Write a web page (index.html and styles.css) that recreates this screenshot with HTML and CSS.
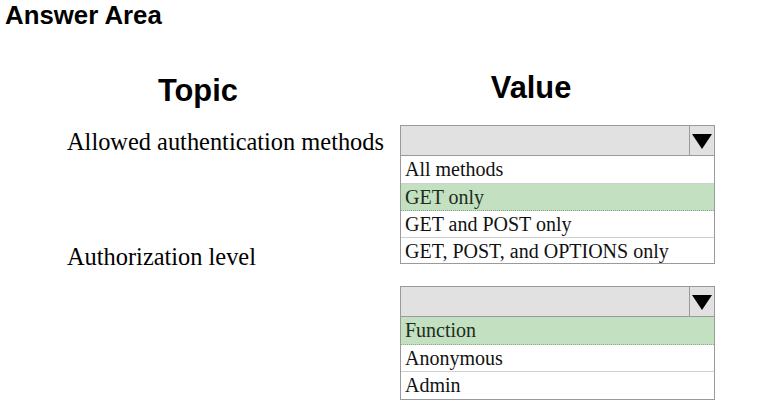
FILE: index.html
```html
<!DOCTYPE html>
<html lang="en">
<head>
    <meta charset="UTF-8">
    <meta name="viewport" content="width=device-width, initial-scale=1.0">
    <title>Answer Area</title>
    <link rel="stylesheet" href="styles.css">
</head>
<body>
    <h1 class="area-title">Answer Area</h1>

    <div class="headings">
        <h2 class="heading topic">Topic</h2>
        <h2 class="heading value">Value</h2>
    </div>

    <div class="answer-grid">
        <div class="labels">
            <div class="label first">Allowed authentication methods</div>
            <div class="label second">Authorization level</div>
        </div>

        <div class="dropdowns">
            <!-- Allowed authentication methods -->
            <div class="dropdown">
                <div class="dropdown-head">
                    <div class="dropdown-value"></div>
                    <div class="dropdown-arrow">
                        <svg width="20" height="16" viewBox="0 0 20 16"><polygon points="0,1 20,1 10,16" fill="#000"/></svg>
                    </div>
                </div>
                <div class="option">All methods</div>
                <div class="option selected">GET only</div>
                <div class="option">GET and POST only</div>
                <div class="option">GET, POST, and OPTIONS only</div>
            </div>

            <!-- Authorization level -->
            <div class="dropdown">
                <div class="dropdown-head">
                    <div class="dropdown-value"></div>
                    <div class="dropdown-arrow">
                        <svg width="20" height="16" viewBox="0 0 20 16"><polygon points="0,1 20,1 10,16" fill="#000"/></svg>
                    </div>
                </div>
                <div class="option selected">Function</div>
                <div class="option">Anonymous</div>
                <div class="option">Admin</div>
            </div>
        </div>
    </div>
</body>
</html>
```

FILE: styles.css
```css
body {
    margin: 0;
    padding: 0;
    background-color: #ffffff;
    color: #000000;
    font-family: "Liberation Serif", "Times New Roman", serif;
}

.area-title {
    margin: 0;
    padding: 1px 0 0 5px;
    font-family: "Liberation Sans", Arial, sans-serif;
    font-size: 25.8px;
    font-weight: bold;
    line-height: 29px;
}

.headings {
    display: flex;
    margin-top: 40px;
    height: 40px;
}

.heading {
    margin: 0;
    font-family: "Liberation Sans", Arial, sans-serif;
    font-size: 30.8px;
    font-weight: bold;
    line-height: 34px;
}

.heading.topic {
    margin-left: 158px;
    margin-top: 4px;
}

.heading.value {
    margin-left: 253px;
    margin-top: 1px;
}

.answer-grid {
    display: flex;
    margin-top: 15px;
}

.labels {
    width: 400px;
    padding-left: 67px;
    box-sizing: border-box;
}

.label {
    font-size: 24.4px;
    line-height: 28px;
}

.label.first {
    margin-top: 3px;
}

.label.second {
    margin-top: 87px;
}

.dropdowns {
    display: flex;
    flex-direction: column;
    gap: 22px;
}

.dropdown {
    width: 315px;
    box-sizing: border-box;
    border: 1px solid #9a9a9a;
    background-color: #fff;
}

.dropdown-head {
    display: flex;
    height: 29px;
    background-color: #e1e1e1;
    border-bottom: 1px solid #9a9a9a;
}

.dropdown-value {
    flex: 1;
}

.dropdown-arrow {
    width: 24px;
    border-left: 1px solid #9a9a9a;
    display: flex;
    align-items: center;
    justify-content: center;
}

.option {
    height: 26px;
    line-height: 26px;
    padding-left: 4px;
    font-size: 20px;
    border-top: 1px solid #cfcfcf;
    color: #111;
}

.dropdown-head + .option {
    border-top: none;
    height: 27px;
}

.option.selected {
    background-color: #c3e0c1;
    border-bottom: 1px dotted #8aa88a;
    color: #1d2d1d;
}

.option.selected + .option {
    border-top: none;
}

.dropdown:first-child .option:last-child {
    height: 25px;
}

.dropdown:last-child .option:last-child {
    height: 27px;
}
```
